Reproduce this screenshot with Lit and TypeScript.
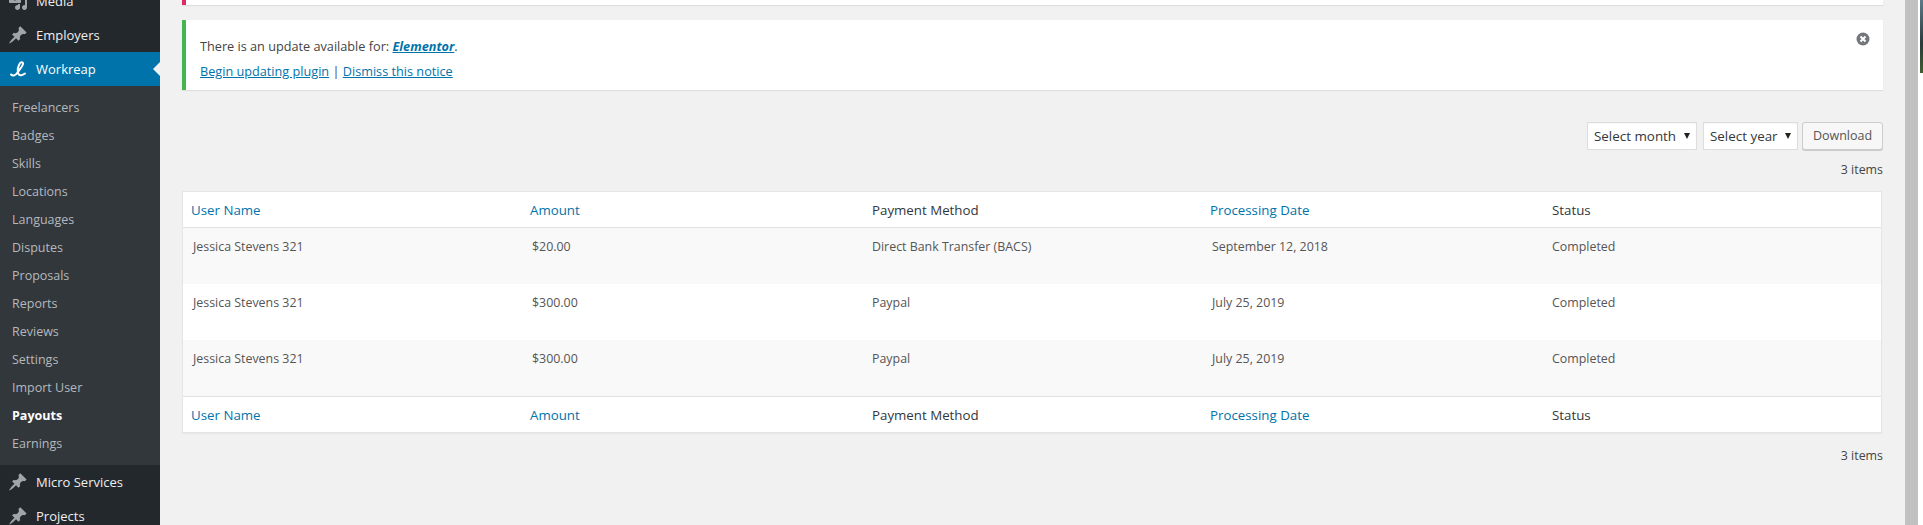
import { LitElement, html, css, svg } from "lit";
import { customElement } from "lit/decorators.js";

const pin = svg`<path d="M10.44 3.02l1.82-1.82 6.36 6.350-1.830 1.820c-1.050-.68-2.480-.57-3.410.36l-.75.750c-.92.930-1.040 2.350-.35 3.410l-1.830 1.820-2.410-2.410-2.800 2.790c-.42.420-3.380 2.710-3.800 2.290s1.860-3.390 2.280-3.810l2.790-2.790L4.100 9.590l1.830-1.820c1.050.69 2.480.57 3.400-.35l.75-.75c.93-.92 1.050-2.350.36-3.410z"/>`;

const rows = [
  ["Jessica Stevens 321", "$20.00", "Direct Bank Transfer (BACS)", "September 12, 2018", "Completed"],
  ["Jessica Stevens 321", "$300.00", "Paypal", "July 25, 2019", "Completed"],
  ["Jessica Stevens 321", "$300.00", "Paypal", "July 25, 2019", "Completed"],
];
const subs = ["Freelancers","Badges","Skills","Locations","Languages","Disputes","Proposals","Reports","Reviews","Settings","Import User","Payouts","Earnings"];

@customElement("app-root")
export class AppRoot extends LitElement {
  static styles = css`
    :host { display: block; height: 525px; overflow: hidden; background: #f1f1f1; font-family: "Open Sans", "Noto Sans", sans-serif; font-size: 13px; color: #444; }
    * { box-sizing: border-box; }
    a { color: #0073aa; }
    .page { display: flex; height: 525px; }
    .side { width: 160px; flex: none; background: #23282d; color: #eee; margin-top: -16px; height: 600px; }
    .item { height: 34px; display: flex; align-items: center; position: relative; font-size: 13px; color: #eee; }
    .ico { width: 36px; flex: none; display: flex; justify-content: center; padding-right: 1px; }
    .ico svg { width: 20px; height: 20px; fill: #a0a5aa; display: block; }
    .item.on { background: #0073aa; color: #fff; }
    .item.on .ico svg { fill: none; stroke: #fff; stroke-width: 2; stroke-linecap: round; }
    .item.on::after { content: ""; position: absolute; right: 0; top: 10px; border: 7px solid transparent; border-left: 0; border-right: 7px solid #f1f1f1; }
    .sub { background: #32373c; padding: 8px 0 7px; }
    .sub div { height: 28px; line-height: 28px; padding-left: 12px; font-size: 12.5px; color: #b4b9be; }
    .sub div.cur { color: #fff; font-weight: 700; }
    .main { flex: 1; min-width: 0; padding: 0 22px 0 22px; }
    .notice { background: #fff; box-shadow: 0 1px 1px rgba(0,0,0,.08); border-left: 4px solid #46b450; }
    .notice.red { border-left-color: #dc2a6a; height: 5px; margin-bottom: 15px; }
    .notice.upd { height: 70px; padding: 14px 14px 0 14px; position: relative; font-size: 12.7px; line-height: 25px; color: #444; }
    .notice.upd strong { font-style: italic; }
    .x { position: absolute; right: 13px; top: 12px; width: 14px; height: 14px; }
    .x svg { display: block; width: 14px; height: 14px; }
    .tools { display: flex; justify-content: flex-end; align-items: flex-start; margin-top: 32px; height: 30px; }
    .sel { height: 28px; background: #fff; border: 1px solid #ddd; display: flex; align-items: center; justify-content: space-between; padding: 0 6px 0 6px; font-size: 13.4px; color: #32373c; box-shadow: inset 0 1px 2px rgba(0,0,0,.04); }
    .sel.m { width: 110px; margin-right: 6px; }
    .sel.y { width: 95px; margin-right: 4px; }
    .sel i { width: 0; height: 0; border: 3.500px solid transparent; border-top: 6px solid #222; border-bottom: 0; font-style: normal; }
    .btn { width: 81px; height: 28px; padding-bottom: 2px; border: 1px solid #ccc; border-radius: 3px; background: #f7f7f7; box-shadow: 0 1px 0 #ccc; color: #555; font-size: 12.5px; display: flex; align-items: center; justify-content: center; }
    .count { text-align: right; height: 39px; padding-top: 9px; line-height: 18px; font-size: 12.4px; color: #444; }
    .tbl { background: #fff; border: 1px solid #e5e5e5; box-shadow: 0 1px 1px rgba(0,0,0,.04); margin-right: 1px; }
    .r { display: grid; }
    .hd { grid-template-columns: 339px 342px 338px 342px 1fr; height: 36px; align-items: center; font-size: 13.3px; color: #32373c; padding-left: 8px; border-bottom: 1px solid #e1e1e1; }
    .hd.ft { border-bottom: 0; height: 36px; border-top: 1px solid #e1e1e1; }
    .hd span.l { color: #0073aa; }
    .rw { grid-template-columns: 339px 340px 340px 340px 1fr; height: 56px; padding: 10px 0 0 10px; font-size: 12.4px; line-height: 18px; color: #555; background: #fff; }
    .rw.alt { background: #f9f9f9; }
    .count.b { padding-top: 14px; height: 40px; }
    .edge { width: 18px; flex: none; display: flex; background: #f1f1f1; }
    .bar { width: 13px; background: #c1c1c1; flex: none; }
    .strip { flex: 1; background: #fff; display: flex; justify-content: flex-end; }
    .strip i { width: 3px; height: 73px; background: linear-gradient(#5c7a8a, #2a3a3a 60%, #3f5f30); display: block; }
  `;

  head(ft = false) {
    return html`<div class="r hd ${ft ? "ft" : ""}">
      <span class="l">User Name</span><span class="l">Amount</span><span>Payment Method</span><span class="l">Processing Date</span><span>Status</span>
    </div>`;
  }

  render() {
    return html`<div class="page">
      <nav class="side">
        <div class="item"><span class="ico"><svg viewBox="0 0 20 20"><path d="M13 11V4c0-.55-.45-1-1-1h-1.670L9 1H5L3.670 3H2c-.55 0-1 .45-1 1v7c0 .55.45 1 1 1h10c.55 0 1-.45 1-1zM7 4.500c1.380 0 2.500 1.120 2.500 2.500S8.380 9.500 7 9.500 4.500 8.380 4.500 7 5.620 4.500 7 4.500zM14 6h5v10.500c0 1.380-1.120 2.500-2.500 2.500S14 17.880 14 16.500s1.120-2.500 2.500-2.500c.17 0 .34.020.5.050V9h-3V6zm-4 8.050V13h2v3.500c0 1.380-1.120 2.500-2.500 2.500S7 17.880 7 16.500 8.120 14 9.500 14c.17 0 .34.020.5.050z"/></svg></span>Media</div>
        <div class="item"><span class="ico"><svg viewBox="0 0 20 20">${pin}</svg></span>Employers</div>
        <div class="item on"><span class="ico"><svg viewBox="0 0 20 20"><path d="M3 15.500C5 17.500 7.500 16.500 9.500 13.500 11.500 10.500 15 7 15 4.800 15 2.500 12.500 2.800 11.500 5 10 8 9 12 10.500 15 11.500 17 14.500 16.500 17 14.500"/></svg></span>Workreap</div>
        <div class="sub">${subs.map((s) => html`<div class=${s === "Payouts" ? "cur" : ""}>${s}</div>`)}</div>
        <div class="item"><span class="ico"><svg viewBox="0 0 20 20">${pin}</svg></span>Micro Services</div>
        <div class="item"><span class="ico"><svg viewBox="0 0 20 20">${pin}</svg></span>Projects</div>
      </nav>
      <main class="main">
        <div class="notice red"></div>
        <div class="notice upd">
          <div>There is an update available for: <a href="#"><strong>Elementor</strong></a>.</div>
          <div><a href="#">Begin updating plugin</a> | <a href="#">Dismiss this notice</a></div>
          <span class="x"><svg viewBox="0 0 14 14"><circle cx="7" cy="7" r="6.500" fill="#72777c"/><path d="M4.500 4.500l5 5M9.500 4.500l-5 5" stroke="#fff" stroke-width="2"/></svg></span>
        </div>
        <div class="tools">
          <div class="sel m">Select month<i></i></div>
          <div class="sel y">Select year<i></i></div>
          <div class="btn">Download</div>
        </div>
        <div class="count">3 items</div>
        <div class="tbl">
          ${this.head()}
          ${rows.map((r, i) => html`<div class="r rw ${i % 2 === 0 ? "alt" : ""}">${r.map((c) => html`<span>${c}</span>`)}</div>`)}
          ${this.head(true)}
        </div>
        <div class="count b">3 items</div>
      </main>
      <div class="edge"><div class="bar"></div><div class="strip"><i></i></div></div>
    </div>`;
  }
}
